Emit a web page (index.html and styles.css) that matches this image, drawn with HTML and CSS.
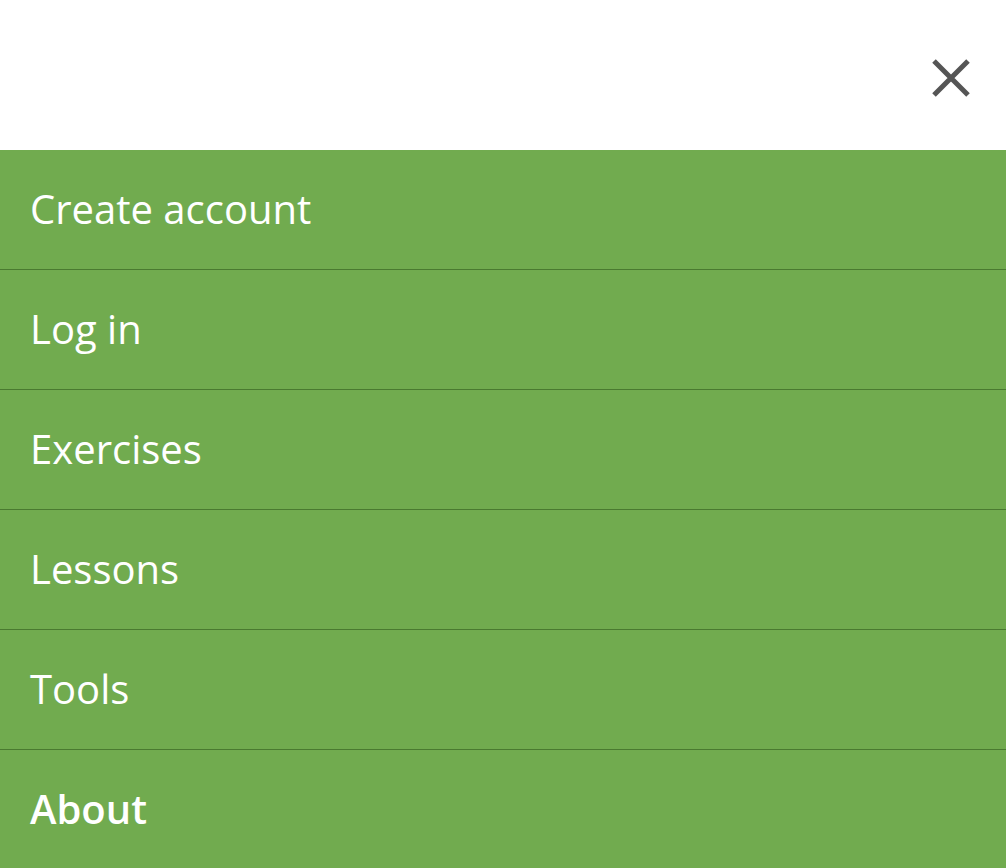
FILE: index.html
```html
<!DOCTYPE html>
<html>
<head>
<meta charset="utf-8">
<link rel="stylesheet" href="styles.css">
</head>
<body>
<header class="top">
  <button class="close" aria-label="Close">
    <svg width="42" height="42" viewBox="0 0 42 42"><path d="M4 4 L38 38 M38 4 L4 38" stroke="#555" stroke-width="5" fill="none"/></svg>
  </button>
</header>
<nav class="menu">
  <a class="item" href="#">Create account</a>
  <a class="item" href="#">Log in</a>
  <a class="item" href="#">Exercises</a>
  <a class="item" href="#">Lessons</a>
  <a class="item" href="#">Tools</a>
  <a class="item active" href="#">About</a>
</nav>
</body>
</html>
```
FILE: styles.css
```css
html, body { margin: 0; padding: 0; background: #fff; }
body { font-family: "Open Sans", sans-serif; overflow: hidden; }
.top {
  height: 150px;
  display: flex;
  justify-content: flex-end;
  align-items: center;
  padding-right: 34px;
  box-sizing: border-box;
}
.close {
  border: 0; background: none; padding: 0; margin-top: 6px;
  width: 42px; height: 42px; display: block; cursor: pointer;
}
.close svg { display: block; }
.menu { display: flex; flex-direction: column; background: #71ab4f; }
.item {
  display: flex; align-items: center;
  height: 120px; box-sizing: border-box;
  padding-left: 30px; padding-bottom: 2px;
  border-bottom: 1px solid #4a7a30;
  color: #fff; text-decoration: none;
  font-size: 40px; line-height: 1;
  background: #71ab4f;
}
.item.active { font-weight: 600; }
```
